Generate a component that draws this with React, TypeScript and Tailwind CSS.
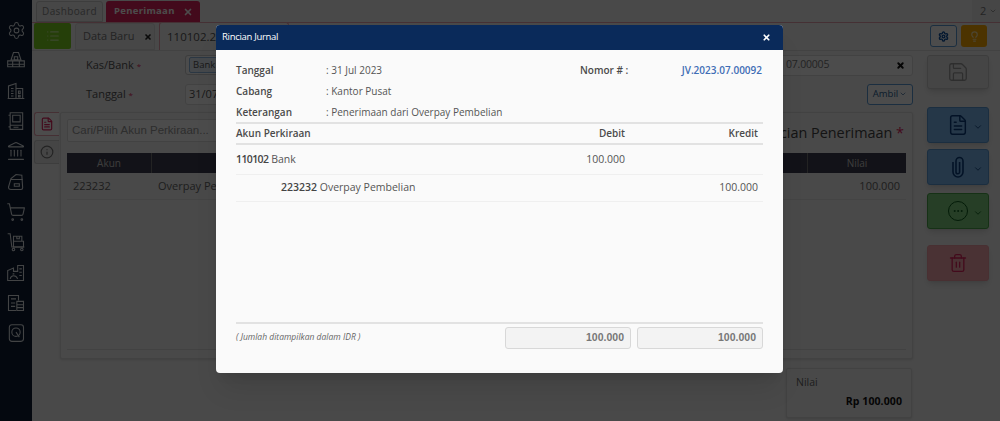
import {
  ChevronDown,
  Ellipsis,
  FileText,
  Info,
  Landmark,
  Lightbulb,
  List,
  Save,
  Settings,
  ShoppingCart,
  Trash2,
  X,
} from 'lucide-react';

const iconProps = { strokeWidth: 1.3, fill: 'none', stroke: 'currentColor', viewBox: '0 0 24 24' };

function WarehouseIcon() {
  return (
    <svg {...iconProps} className="w-[20px] h-[20px]">
      <path d="M9 3h6l3 9H6z" />
      <path d="M10 8h4v4h-4z" />
      <path d="M2 13h20v7H2zM2 17h20M8 13v7M16 13v7" />
    </svg>
  );
}

function BuildingIcon() {
  return (
    <svg {...iconProps} className="w-[20px] h-[20px]">
      <path d="M3 21V6l9-3v18M12 9h8v12M2 21h20" />
      <path d="M6 9h3M6 12h3M6 15h3M6 18h3M15 12h2v3h-2zM15 17h2v2h-2z" />
    </svg>
  );
}

function BookIcon() {
  return (
    <svg {...iconProps} className="w-[20px] h-[20px]">
      <path d="M5 2h15v20H5zM5 17h15M3 5h2M3 19h2" />
      <path d="M8 5h9v8H8zM9 19.5h6" />
    </svg>
  );
}

function BagIcon() {
  return (
    <svg {...iconProps} className="w-[20px] h-[20px]">
      <path d="M6 21c-2 0-3-1-3-3l3-10 6-5 7 1 1 15c0 1-1 2-2 2z" />
      <path d="M6 9h14M10 14h6v3h-6z" />
    </svg>
  );
}

function TrolleyIcon() {
  return (
    <svg {...iconProps} className="w-[20px] h-[20px]">
      <path d="M2 2h3l2 16h15" />
      <path d="M9 5h10v6H9zM9 11h12v7H9zM13 5v3h3V5" />
      <circle cx="9" cy="21" r="1.5" />
      <circle cx="19" cy="21" r="1.5" />
    </svg>
  );
}

function FactoryIcon() {
  return (
    <svg {...iconProps} className="w-[20px] h-[20px]">
      <path d="M2 21V9l7-3v4h5V3h7v18z" />
      <path d="M5 19c1-5 7-5 9 0M16 7h3M16 11h3M16 15h3M8 13h2" />
    </svg>
  );
}

function ReportIcon() {
  return (
    <svg {...iconProps} className="w-[20px] h-[20px]">
      <path d="M12 21H3V3h12v6" />
      <path d="M6 7h6M6 12h5M6 16h5" />
      <path d="M13 10h8v11h-8zM13 14h8M13 17.5h8" />
    </svg>
  );
}

function DiskIcon() {
  return (
    <svg {...iconProps} className="w-[20px] h-[20px]">
      <rect x="4" y="2" width="17" height="20" rx="3" />
      <circle cx="12" cy="11" r="5" />
      <path d="M12 11l4 6" />
    </svg>
  );
}

function ClipIcon() {
  return (
    <svg fill="none" stroke="currentColor" strokeWidth={1.6} viewBox="0 0 24 24" className="w-[24px] h-[24px] mr-[-1px]">
      <path d="M7 7v10a5 5 0 0 0 10 0V6a3.5 3.5 0 0 0-7 0v11a1.8 1.8 0 0 0 3.6 0V7" />
    </svg>
  );
}

function Sidebar() {
  const cls = 'h-[30.3px] flex items-center justify-center shrink-0';
  return (
    <aside className="w-[32px] h-full shrink-0 bg-[#0e1d33] text-[#dfe3e8] pt-[15px] flex flex-col">
      <div className={cls}><Settings className="w-[19px] h-[19px]" strokeWidth={1.3} /></div>
      <div className={cls}><WarehouseIcon /></div>
      <div className={cls}><BuildingIcon /></div>
      <div className={cls}><BookIcon /></div>
      <div className={cls}><Landmark className="w-[20px] h-[20px]" strokeWidth={1.3} /></div>
      <div className={cls}><BagIcon /></div>
      <div className={cls}><ShoppingCart className="w-[20px] h-[20px]" strokeWidth={1.3} /></div>
      <div className={cls}><TrolleyIcon /></div>
      <div className={cls}><FactoryIcon /></div>
      <div className={cls}><ReportIcon /></div>
      <div className={cls}><DiskIcon /></div>
    </aside>
  );
}

function ActionButton({ tone, icon }: { tone: string; icon: React.ReactNode }) {
  return (
    <div className={`w-[62px] h-[36px] rounded-[3px] border flex items-center justify-end pr-[5px] gap-[4px] shadow-md ${tone}`}>
      {icon}
      <ChevronDown className="w-[10px] h-[10px] mt-[4px]" />
    </div>
  );
}

function Background() {
  return (
    <div className="flex h-full w-full bg-[#f4f4f4] text-[#555]">
      <Sidebar />
      <div className="flex-1 min-w-0 flex flex-col">
        {/* top tabs */}
        <div className="h-[23px] shrink-0 border-b border-[#e8a0b0] flex items-end pl-[4px] gap-[3px] relative">
          <div className="w-[67px] h-[21px] rounded-t-[3px] border border-[#ccc] bg-[#eee] text-[10px] tracking-[0.35px] flex items-center justify-center text-[#888]">
            Dashboard
          </div>
          <div className="w-[94px] h-[21px] rounded-t-[3px] bg-[#e0245e] text-white text-[9.5px] font-bold tracking-[0.3px] flex items-center justify-between pl-[8px] pr-[7px]">
            Penerimaan
            <X className="w-[10px] h-[10px]" strokeWidth={4} />
          </div>
          <div className="ml-auto w-[28px] h-full bg-[#ececec] text-[11px] flex items-center pl-[8px] gap-[3px] text-[#777]">
            2
            <ChevronDown className="w-[8px] h-[8px]" />
          </div>
        </div>
        {/* second row */}
        <div className="h-[28px] shrink-0 border-b border-[#ddd] flex items-end pl-[2px] relative">
          <div className="w-[37px] h-[26px] mb-px rounded-[2px] bg-[#7ed321] text-[#c9f29a] flex items-center justify-center">
            <List className="w-[14px] h-[14px]" />
          </div>
          <div className="ml-[4px] w-[80px] h-[27px] border border-[#ddd] bg-[#eee] rounded-t-[3px] text-[11px] flex items-center pl-[7px] gap-[10px] text-[#777]">
            Data Baru
            <X className="w-[8px] h-[8px] text-[#222]" strokeWidth={5} />
          </div>
          <div className="ml-[4px] w-[130px] h-[28px] border border-[#e8a0b0] border-b-0 bg-[#f4f4f4] rounded-t-[3px] text-[11.5px] flex items-center pl-[7px] text-[#555]">
            110102.2023
          </div>
          <div className="ml-auto mb-[3px] w-[27px] h-[22px] border border-[#5b9bd5] rounded-[3px] bg-white flex items-center justify-center text-[#0a4fa0]">
            <Settings className="w-[11px] h-[11px]" strokeWidth={3} />
          </div>
          <div className="ml-[4px] mr-[13px] mb-[3px] w-[26px] h-[22px] rounded-[3px] bg-[#ffaa00] flex items-center justify-center text-[#ffe9a8]">
            <Lightbulb className="w-[11px] h-[11px]" strokeWidth={2.5} />
          </div>
        </div>
        {/* body */}
        <div className="flex-1 min-h-0 flex">
          <div className="w-[881px] pl-[2px] shrink-0 flex flex-col">
            <div className="h-[20px] mt-[4px] flex items-center">
              <span className="ml-[52px] w-[99px] text-[11px]">Kas/Bank <span className="text-[#e0245e] text-[8px]">*</span></span>
              <div className="w-[250px] h-[20px] border border-[#ccc] rounded-[3px] bg-white flex items-center pl-[3px]">
                <span className="border border-[#8fb8e0] bg-[#e8f1fa] rounded-[2px] px-[3px] text-[9.5px]">Bank</span>
              </div>
              <div className="ml-auto w-[300px] h-[21px] border border-[#ddd] rounded-[3px] bg-white flex items-center justify-end pr-[7px] text-[10.5px]">
                <span className="mr-auto pl-[172px] text-[#777] tracking-[-0.2px]">07.00005</span>
                <X className="w-[9px] h-[9px] text-[#111]" strokeWidth={5} />
              </div>
            </div>
            <div className="h-[22px] mt-[8px] flex items-center">
              <span className="ml-[52px] w-[99px] text-[11px] pt-[1px]">Tanggal <span className="text-[#e0245e] text-[8px]">*</span></span>
              <div className="w-[120px] h-[21px] border border-[#ddd] rounded-[3px] bg-white flex items-center pl-[3px] text-[11px]">31/07/2023</div>
              <div className="ml-auto w-[46px] h-[21px] border border-[#5b9bd5] rounded-[3px] bg-white flex items-center justify-center gap-px text-[9.5px] text-[#2a5f96]">
                Ambil
                <ChevronDown className="w-[8px] h-[8px]" />
              </div>
            </div>
            <div className="mt-[7px] flex">
              <div className="w-[26px] shrink-0 flex flex-col gap-[4px]">
                <div className="w-[25px] h-[24px] border border-[#e8a0b0] border-r-0 rounded-l-[3px] bg-white flex items-center justify-center text-[#e0245e]">
                  <FileText className="w-[14px] h-[14px]" />
                </div>
                <div className="w-[25px] h-[24px] border border-[#ccc] border-r-0 rounded-l-[3px] bg-[#e8e8e8] flex items-center justify-center text-[#777]">
                  <Info className="w-[14px] h-[14px]" />
                </div>
              </div>
              <div className="w-[853px] h-[247px] border border-[#ddd] rounded-[2px] bg-[#f4f4f4] shadow px-[6px] pt-[6px] flex flex-col">
                <div className="flex items-center justify-between h-[23px]">
                  <div className="w-[300px] h-[23px] border border-[#ddd] rounded-[2px] bg-white pl-[4px] flex items-center text-[11.5px] text-[#999] whitespace-nowrap font-['Liberation_Sans',sans-serif]">
                    Cari/Pilih Akun Perkiraan...
                  </div>
                  <div className="text-[14.4px] pr-[2px] pt-[5px] text-[#444] whitespace-nowrap">
                    Rincian Penerimaan <span className="text-[#e0245e]">*</span>
                  </div>
                </div>
                <div className="mt-[11px] h-[20px] bg-[#3f3f50] text-[#ccc] text-[10px] flex items-center">
                  <div className="w-[85px] text-center border-r border-[#777] h-full leading-[20px]">Akun</div>
                  <div className="flex-1" />
                  <div className="w-[99px] text-center border-l border-[#777] h-full leading-[20px]">Nilai</div>
                </div>
                <div className="h-[27px] border-b border-[#e4e4e4] flex items-center text-[11px] text-[#666]">
                  <div className="w-[85px] pl-[6px]">223232</div>
                  <div className="flex-1 pl-[6px]">Overpay Pembelian</div>
                  <div className="w-[99px] text-right pr-[6px]">100.000</div>
                </div>
                <div className="flex-1" />
                <div className="border-t border-[#ddd] mb-[8px]" />
              </div>
            </div>
            <div className="mt-[9px] ml-auto mr-[1px] w-[126px] h-[50px] border border-[#ddd] rounded-[2px] bg-[#f4f4f4] shadow pl-[9px] pr-[9px] pt-[6px] text-[10.5px]">
              <div className="text-[#666]">Nilai</div>
              <div className="text-right font-bold text-[#111] mt-[3px] tracking-[0.1px]">Rp 100.000</div>
            </div>
          </div>
          <div className="flex-1 pl-[14px] pt-[4px] flex flex-col">
            <div className="w-[62px] h-[34px] border border-[#ccc] rounded-[3px] bg-[#e8e8e8] shadow-md flex items-center justify-center text-[#999]">
              <Save className="w-[22px] h-[22px]" strokeWidth={1.4} />
            </div>
            <div className="mt-[18px]">
              <ActionButton tone="bg-[#7db8f0] border-[#5b9bd5] text-[#0a3f80]" icon={<FileText className="w-[22px] h-[22px]" strokeWidth={1.6} />} />
            </div>
            <div className="mt-[6px]">
              <ActionButton tone="bg-[#7db8f0] border-[#5b9bd5] text-[#0a3f80]" icon={<ClipIcon />} />
            </div>
            <div className="mt-[8px]">
              <ActionButton
                tone="bg-[#7fcf7f] border-[#4ca64c] text-[#0a5a1a]"
                icon={
                  <span className="w-[20px] h-[20px] mr-[1px] rounded-full border-[1.5px] border-current flex items-center justify-center">
                    <Ellipsis className="w-[12px] h-[12px]" />
                  </span>
                }
              />
            </div>
            <div className="mt-[16px] w-[62px] h-[36px] border border-[#f0a0a8] rounded-[3px] bg-[#f7a9ae] shadow-md flex items-center justify-center text-[#e0245e]">
              <Trash2 className="w-[20px] h-[20px]" strokeWidth={1.6} />
            </div>
          </div>
        </div>
      </div>
    </div>
  );
}

function InfoRow({ label, value }: { label: string; value: string }) {
  return (
    <div className="flex h-[21px] items-center text-[10px]">
      <div className="w-[90px] font-semibold text-[#4a4a4a]">{label}</div>
      <div className="text-[#555]">: {value}</div>
    </div>
  );
}

function JurnalModal() {
  return (
    <div className="absolute left-[216px] top-[25px] w-[567px] h-[348px] rounded-[4px] bg-[#fafafa] flex flex-col overflow-hidden text-[10.5px] font-['Open_Sans',sans-serif] shadow-xl">
      <div className="h-[25px] shrink-0 bg-[#0a2a5a] text-white flex items-center justify-between pl-[6px] pr-[12px]">
        <span className="text-[9.5px] tracking-[-0.3px]">Rincian Jurnal</span>
        <X className="w-[9px] h-[9px]" strokeWidth={4.5} />
      </div>
      <div className="flex-1 px-[20px] pt-[10px] flex flex-col">
        <div className="flex justify-between">
          <div>
            <InfoRow label="Tanggal" value="31 Jul 2023" />
            <InfoRow label="Cabang" value="Kantor Pusat" />
            <InfoRow label="Keterangan" value="Penerimaan dari Overpay Pembelian" />
          </div>
          <div className="flex h-[21px] items-center pr-[1px] text-[10px]">
            <span className="font-semibold text-[#4a4a4a] w-[100px]">Nomor # :</span>
            <span className="font-semibold text-[#3f6db5] w-[82px] text-right whitespace-nowrap">JV.2023.07.00092</span>
          </div>
        </div>
        <div className="h-[19px] -mt-[1px] border-y-2 border-[#e2e2e2] box-content flex items-center font-semibold text-[#4a4a4a] text-[10px]">
          <div className="flex-1">Akun Perkiraan</div>
          <div className="w-[80px] text-right pr-[5px] mr-[53px]">Debit</div>
          <div className="w-[80px] text-right pr-[5px]">Kredit</div>
        </div>
        <div className="h-[30px] border-b border-[#efefef] flex items-center text-[#555]">
          <div className="flex-1"><span className="font-semibold text-[#444] tracking-[-0.6px]">110102</span> Bank</div>
          <div className="w-[80px] text-right pr-[5px] mr-[53px]">100.000</div>
          <div className="w-[80px] text-right pr-[5px]" />
        </div>
        <div className="h-[27px] border-b border-[#efefef] flex items-center text-[#555]">
          <div className="flex-1 pl-[45px]"><span className="font-semibold text-[#444]">223232</span> Overpay Pembelian</div>
          <div className="w-[80px] text-right pr-[5px] mr-[53px]" />
          <div className="w-[80px] text-right pr-[5px]">100.000</div>
        </div>
        <div className="flex-1" />
        <div className="border-t-2 border-[#e2e2e2] mb-[24px] pt-[3px] flex items-start">
          <div className="flex-1 pt-[4px] text-[8.5px] italic text-[#666]">( Jumlah ditampilkan dalam IDR )</div>
          <div className="flex gap-[6px]">
            <div className="w-[126px] h-[22px] rounded-[3px] border border-[#d8d8d8] bg-[#f3f3f3] flex items-center justify-end pr-[6px] font-bold text-[#777] font-['Liberation_Sans',sans-serif]">100.000</div>
            <div className="w-[126px] h-[22px] rounded-[3px] border border-[#d8d8d8] bg-[#f3f3f3] flex items-center justify-end pr-[6px] font-bold text-[#777] font-['Liberation_Sans',sans-serif]">100.000</div>
          </div>
        </div>
      </div>
    </div>
  );
}

export default function App() {
  return (
    <div className="relative w-[1000px] h-[421px] overflow-hidden font-['Open_Sans',sans-serif]">
      <Background />
      {/* modal backdrop */}
      <div className="absolute inset-0 bg-black/70" />
      <JurnalModal />
    </div>
  );
}
